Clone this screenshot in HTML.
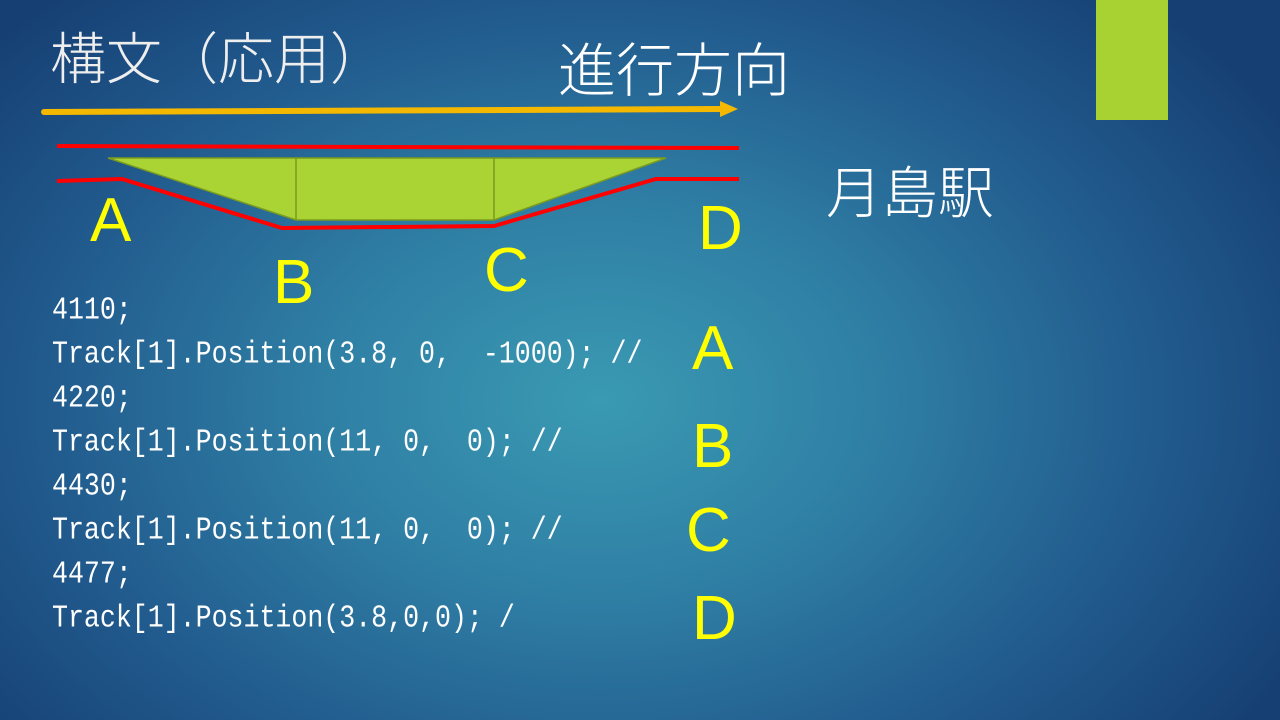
<!DOCTYPE html>
<html><head><meta charset="utf-8"><style>
html,body{margin:0;padding:0}
body{width:1280px;height:720px;overflow:hidden;position:relative;
background:radial-gradient(ellipse 800px 560px at 600px 400px,#3a9ab2 0%,#2f7fa5 35%,#215a8d 70%,#163f73 100%);
font-family:"Liberation Sans","Noto Sans CJK JP",sans-serif;}
.t{position:absolute;white-space:pre;line-height:1}
.y{color:#ffff00;font-size:62px;font-weight:300}
.code{position:absolute;left:52px;color:#fff;font-family:"Liberation Mono",monospace;font-size:26.6px;white-space:pre;transform:scaleY(1.2);transform-origin:left center;line-height:1}
</style></head><body>
<div style="position:absolute;left:1096px;top:0;width:72px;height:120px;background:#a8d232"></div>
<div class="t" style="left:50px;top:28px;color:#eee;font-size:56px;font-family:'Noto Sans CJK JP',sans-serif;font-weight:300">構文（応用）</div>
<div class="t" style="left:558px;top:37px;color:#fff;font-size:58px;font-family:'Noto Sans CJK JP',sans-serif;font-weight:300">進行方向</div>
<div class="t" style="left:826px;top:162px;color:#fff;font-size:56px;font-family:'Noto Sans CJK JP',sans-serif;font-weight:300">月島駅</div>
<svg width="1280" height="720" style="position:absolute;left:0;top:0">
<line x1="44" y1="112" x2="722" y2="109" stroke="#f5b800" stroke-width="6" stroke-linecap="round"/>
<polygon points="720,101 738,109 720,117" fill="#f5b800"/>
<line x1="57" y1="146" x2="739" y2="148" stroke="#f00" stroke-width="4"/>
<polygon points="108,158 666,158 494,220 296,220" fill="#aad433" stroke="#7a9a20" stroke-width="1.5"/>
<line x1="296" y1="158" x2="296" y2="220" stroke="#7a9a20" stroke-width="1.5"/>
<line x1="494" y1="158" x2="494" y2="220" stroke="#7a9a20" stroke-width="1.5"/>
<polyline points="57,181 122,179 282,228 494,226 656,179 739,179" fill="none" stroke="#f00" stroke-width="4"/>
</svg>
<div class="t y" style="left:90px;top:190px">A</div>
<div class="t y" style="left:273px;top:252px">B</div>
<div class="t y" style="left:484px;top:240px">C</div>
<div class="t y" style="left:698px;top:198px">D</div>
<div class="t y" style="left:692px;top:318px">A</div>
<div class="t y" style="left:692px;top:416px">B</div>
<div class="t y" style="left:686px;top:500px">C</div>
<div class="t y" style="left:692px;top:588px">D</div>
<div class="code" style="top:297px">4110;</div>
<div class="code" style="top:341px">Track[1].Position(3.8, 0,  -1000); //</div>
<div class="code" style="top:385px">4220;</div>
<div class="code" style="top:429px">Track[1].Position(11, 0,  0); //</div>
<div class="code" style="top:473px">4430;</div>
<div class="code" style="top:517px">Track[1].Position(11, 0,  0); //</div>
<div class="code" style="top:561px">4477;</div>
<div class="code" style="top:605px">Track[1].Position(3.8,0,0); /</div>
</body></html>
